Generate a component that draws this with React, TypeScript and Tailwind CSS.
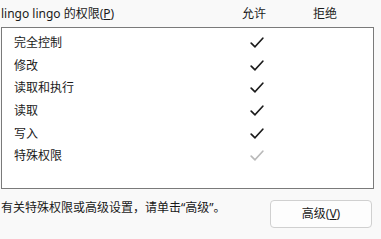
import React from 'react';

const rows: { name: string; allow: 'on' | 'dim' | null }[] = [
    { name: '完全控制', allow: 'on' },
    { name: '修改', allow: 'on' },
    { name: '读取和执行', allow: 'on' },
    { name: '读取', allow: 'on' },
    { name: '写入', allow: 'on' },
    { name: '特殊权限', allow: 'dim' },
];

const Check: React.FC<{ dim?: boolean }> = ({ dim }) => (
    <svg width="14" height="12" viewBox="0 0 14 12" fill="none">
        <path
            d="M1.2 6.2 L5 9.8 L12.8 1.2"
            stroke={dim ? '#b9b9b9' : '#1b1b1b'}
            strokeWidth="1.7"
            strokeLinecap="round"
            strokeLinejoin="round"
        />
    </svg>
);

const App: React.FC = () => {
    return (
        <div
            className="w-[381px] h-[239px] overflow-hidden bg-[#f9f9f9] text-[12px] text-[#1a1a1a]"
            style={{ fontFamily: '"Noto Sans", "Noto Sans CJK SC", sans-serif' }}
        >
            <div className="flex items-center h-[27px] pt-[1px]">
                <span className="w-[221px] pl-[1px]">
                    lingo lingo 的权限(<span className="underline">P</span>)
                </span>
                <span className="w-[66px] text-center">允许</span>
                <span className="w-[76px] text-center">拒绝</span>
            </div>
            <div className="ml-[1px] w-[373px] h-[162px] border border-[#7a7a7a] bg-white pt-[4px]">
                {rows.map((r) => (
                    <div key={r.name} className="flex items-center h-[22.6px]">
                        <span className="w-[220px] pl-[12px]">{r.name}</span>
                        <span className="w-[70px] flex justify-center">
                            {r.allow && <Check dim={r.allow === 'dim'} />}
                        </span>
                    </div>
                ))}
            </div>
            <div className="flex items-start">
                <span className="w-[270px] pl-[1px] mt-[10px]">有关特殊权限或高级设置，请单击“高级”。</span>
                <button className="mt-[11px] w-[102px] h-[28px] rounded-[4px] border border-[#d0d0d0] bg-[#fdfdfd] flex items-center justify-center">
                    高级(<span className="underline">V</span>)
                </button>
            </div>
        </div>
    );
};

export default App;
